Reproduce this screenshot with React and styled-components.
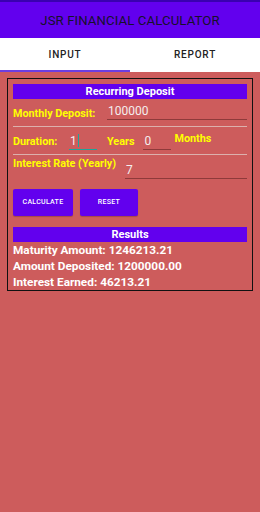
import React from "react";
import styled, { createGlobalStyle } from "styled-components";

const GlobalStyle = createGlobalStyle`
  html, body {
    margin: 0;
    padding: 0;
    background: #cd5c5c;
    font-family: Roboto, "Liberation Sans", sans-serif;
  }
`;

const Screen = styled.div`
  width: 260px;
  height: 512px;
  background: #cd5c5c;
  display: flex;
  flex-direction: column;
`;

const AppBar = styled.div`
  height: 36px;
  border-top: 2px solid #3a00b0;
  background: #6200ee;
  display: flex;
  align-items: center;
  justify-content: center;
  color: #16122a;
  font-size: 13.2px;
  letter-spacing: 0.1px;
`;

const Tabs = styled.div`
  height: 34px;
  background: #fff;
  display: flex;
`;

const Tab = styled.div`
  flex: 1;
  display: flex;
  align-items: center;
  justify-content: center;
  font-size: 10px;
  font-weight: 500;
  letter-spacing: 0.8px;
  color: #222;
  padding-top: 1px;
  box-sizing: border-box;
  border-bottom: 2px solid ${({ active }) => (active ? "#6d3ee0" : "transparent")};
`;

const Content = styled.div`
  padding: 6px 7px;
`;

const Box = styled.div`
  border: 1.5px solid #111;
  padding: 4.5px 5px 0;
  display: flex;
  flex-direction: column;
`;

const SectionBar = styled.div`
  background: #6200ee;
  color: #fff;
  font-weight: 700;
  font-size: 11px;
  text-align: center;
  height: 15px;
  line-height: 15px;
`;

const Row = styled.div`
  display: flex;
  align-items: flex-end;
  height: ${({ h }) => h}px;
  flex-shrink: 0;
  border-bottom: ${({ divider }) => (divider ? "1px solid #dcb0ad" : "none")};
  box-sizing: border-box;
`;

const Label = styled.span`
  color: #ffff00;
  font-weight: 700;
  font-size: 10.8px;
  line-height: 13px;
  width: ${({ w }) => (w ? `${w}px` : "auto")};
  flex-shrink: 0;
  align-self: ${({ top }) => (top ? "flex-start" : "auto")};
  margin-top: ${({ mt }) => mt || 0}px;
  margin-bottom: ${({ mb }) => mb || 0}px;
  margin-left: ${({ ml }) => ml || 0}px;
`;

const Field = styled.div`
  width: ${({ w }) => (w ? `${w}px` : "auto")};
  flex: ${({ grow }) => (grow ? 1 : "none")};
  margin-left: ${({ ml }) => ml || 0}px;
  margin-bottom: ${({ mb }) => mb || 0}px;
  border-bottom: ${({ focused }) => (focused ? "1.5px solid #1fa59a" : "1px solid #8e3a3a")};
  color: #f4eeee;
  font-size: 12px;
  line-height: 14px;
  padding: 0 1px 1px;
  box-sizing: border-box;
  display: flex;
  align-items: center;
`;

const Caret = styled.span`
  display: inline-block;
  width: 1.5px;
  height: 13px;
  background: #1fa59a;
  margin-left: 1px;
`;

const Buttons = styled.div`
  display: flex;
  gap: 7px;
  margin-top: 8px;
`;

const Button = styled.div`
  width: ${({ w }) => w}px;
  height: 27px;
  background: #6200ee;
  border-radius: 2px;
  color: #fff;
  font-size: 7px;
  font-weight: 500;
  letter-spacing: 0.3px;
  display: flex;
  align-items: center;
  justify-content: center;
  box-shadow: 0 1px 1px rgba(0, 0, 0, 0.2);
`;

const Results = styled.div`
  margin-top: 11px;
  display: flex;
  flex-direction: column;
`;

const ResultLine = styled.div`
  color: #fff;
  font-weight: 700;
  font-size: 11.8px;
  line-height: 16.3px;
  white-space: nowrap;
`;

export default function App() {
  return (
    <Screen>
      <GlobalStyle />
      <AppBar>JSR FINANCIAL CALCULATOR</AppBar>
      <Tabs>
        <Tab active>INPUT</Tab>
        <Tab>REPORT</Tab>
      </Tabs>
      <Content>
        <Box>
          <SectionBar>Recurring Deposit</SectionBar>
          <Row h={28} divider>
            <Label w={94} mb={6}>Monthly Deposit:</Label>
            <Field grow mb={6}>100000</Field>
          </Row>
          <Row h={28} divider>
            <Label w={56} mb={6}>Duration:</Label>
            <Field w={28} mb={4} focused>
              1<Caret />
            </Field>
            <Label ml={10} mb={6}>Years</Label>
            <Field w={28} ml={9} mb={4}>0</Field>
            <Label top mt={5} ml={3}>Months</Label>
          </Row>
          <Row h={26}>
            <Label w={112} top mt={2}>Interest Rate (Yearly)</Label>
            <Field grow mb={2}>7</Field>
          </Row>
          <Buttons>
            <Button w={60}>CALCULATE</Button>
            <Button w={58}>RESET</Button>
          </Buttons>
          <Results>
            <SectionBar>Results</SectionBar>
            <ResultLine>Maturity Amount: 1246213.21</ResultLine>
            <ResultLine>Amount Deposited: 1200000.00</ResultLine>
            <ResultLine>Interest Earned: 46213.21</ResultLine>
          </Results>
        </Box>
      </Content>
    </Screen>
  );
}
